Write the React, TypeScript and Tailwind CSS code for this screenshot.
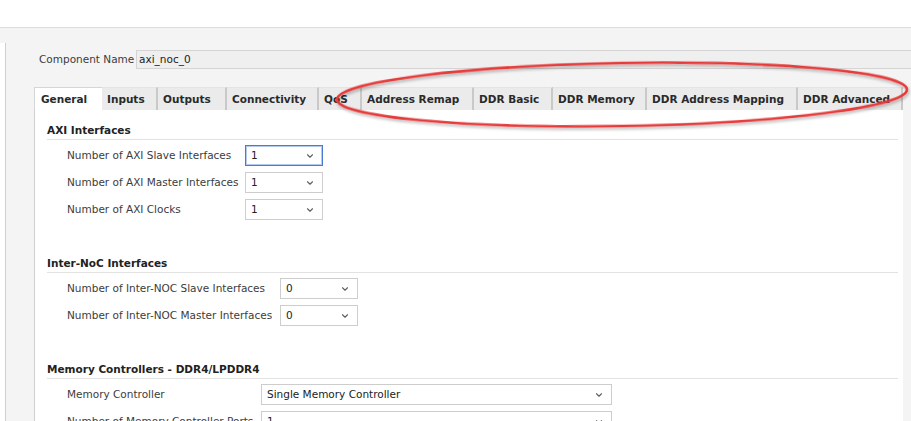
import { ChevronDown } from "lucide-react";

const tabs: { label: string; w: number }[] = [
  { label: "General", w: 68 },
  { label: "Inputs", w: 56 },
  { label: "Outputs", w: 69 },
  { label: "Connectivity", w: 92 },
  { label: "QoS", w: 43 },
  { label: "Address Remap", w: 112 },
  { label: "DDR Basic", w: 79 },
  { label: "DDR Memory", w: 94 },
  { label: "DDR Address Mapping", w: 151 },
  { label: "DDR Advanced", w: 105 },
];

function Select({ value, width, focused }: { value: string; width: number; focused?: boolean }) {
  return (
    <div
      className={`h-[21px] shrink-0 flex items-center justify-between pl-[5px] pr-[7px] bg-white ${
        focused
          ? "border border-[#4a7bd4] shadow-[inset_0_0_0_1px_#b4c9ee]"
          : "border border-[#cdcdcd]"
      }`}
      style={{ width }}
    >
      <span className="text-[#222]">{value}</span>
      <ChevronDown className="w-[10px] h-[10px] text-[#5e5e5e]" strokeWidth={2.6} />
    </div>
  );
}

function Row({
  label,
  labelW,
  value,
  selW,
  focused,
}: {
  label: string;
  labelW: number;
  value: string;
  selW: number;
  focused?: boolean;
}) {
  return (
    <div className="flex items-center h-[21px] shrink-0">
      <div className="shrink-0 text-[#3c3c3c] whitespace-nowrap" style={{ width: labelW }}>
        {label}
      </div>
      <Select value={value} width={selW} focused={focused} />
    </div>
  );
}

function Section({ title, children }: { title: string; children: React.ReactNode }) {
  return (
    <div className="shrink-0">
      <div className="font-bold text-[#222] leading-[15px] pb-[1px] border-b border-[#e2e2e2] mr-[5px]">
        {title}
      </div>
      <div className="pl-[20px] pt-[5px] flex flex-col gap-[6px]">{children}</div>
    </div>
  );
}

export default function App() {
  return (
    <div
      className="relative w-[911px] h-[421px] overflow-hidden bg-[#f4f4f4] text-[10.5px] leading-[15px]"
      style={{ fontFamily: '"DejaVu Sans", "Noto Sans", sans-serif' }}
    >
      <div className="h-[28px] bg-white border-b border-[#dcdcdc]" />

      <div className="flex h-[393px]">
        {/* left side panel edge */}
        <div className="w-[6px] mt-[15px] bg-white border-r border-[#d0d0d0] shrink-0" />

        <div className="flex-1 pl-[28px] flex flex-col min-w-0">
          {/* component name */}
          <div className="flex items-center h-[19px] mt-[22px] shrink-0">
            <span className="w-[102px] pl-[5px] shrink-0 text-[#3c3c3c]">Component Name</span>
            <div className="flex-1 h-[19px] bg-[#efefef] border border-[#d4d4d4] border-r-0 pl-[2px] flex items-center text-[#222]">
              axi_noc_0
            </div>
          </div>

          {/* tabs */}
          <div className="flex mt-[18px] h-[23px] w-[869px] shrink-0">
            {tabs.map((t, i) => (
              <div
                key={t.label}
                className={`h-full flex items-center font-bold text-[#2a2a2a] whitespace-nowrap ${
                  i === 0
                    ? "bg-white border-l border-t border-[#d6d6d6] pl-[6px]"
                    : "bg-[#ebebeb] border-r-2 border-[#c9c9c9] pl-[5px] border-t border-t-[#e4e4e4]"
                }`}
                style={{ width: t.w }}
              >
                {t.label}
              </div>
            ))}
          </div>

          {/* content */}
          <div className="w-[869px] flex-1 min-h-0 bg-white border-l border-[#d0d0d0] pl-[12px] pt-[13px] flex flex-col">
            <Section title="AXI Interfaces">
              <Row label="Number of AXI Slave Interfaces" labelW={178} value="1" selW={78} focused />
              <Row label="Number of AXI Master Interfaces" labelW={178} value="1" selW={78} />
              <Row label="Number of AXI Clocks" labelW={178} value="1" selW={78} />
            </Section>

            <div className="h-[36px] shrink-0" />

            <Section title="Inter-NoC Interfaces">
              <Row label="Number of Inter-NOC Slave Interfaces" labelW={213} value="0" selW={78} />
              <Row label="Number of Inter-NOC Master Interfaces" labelW={213} value="0" selW={78} />
            </Section>

            <div className="h-[36px] shrink-0" />

            <Section title="Memory Controllers - DDR4/LPDDR4">
              <Row label="Memory Controller" labelW={194} value="Single Memory Controller" selW={351} />
              <Row label="Number of Memory Controller Ports" labelW={194} value="1" selW={351} />
            </Section>
          </div>
        </div>
      </div>

      {/* red annotation ellipse */}
      <svg className="absolute inset-0 pointer-events-none" width={911} height={421}>
        <defs>
          <filter id="sh" x="-10%" y="-50%" width="120%" height="200%">
            <feDropShadow dx="1" dy="2" stdDeviation="1.5" floodColor="#000" floodOpacity="0.3" />
          </filter>
        </defs>
        <ellipse
          cx={622}
          cy={94.5}
          rx={285}
          ry={31.5}
          transform="rotate(-1 622 94.5)"
          fill="none"
          stroke="#e63b3b"
          strokeWidth={2.6}
          filter="url(#sh)"
        />
      </svg>
    </div>
  );
}
